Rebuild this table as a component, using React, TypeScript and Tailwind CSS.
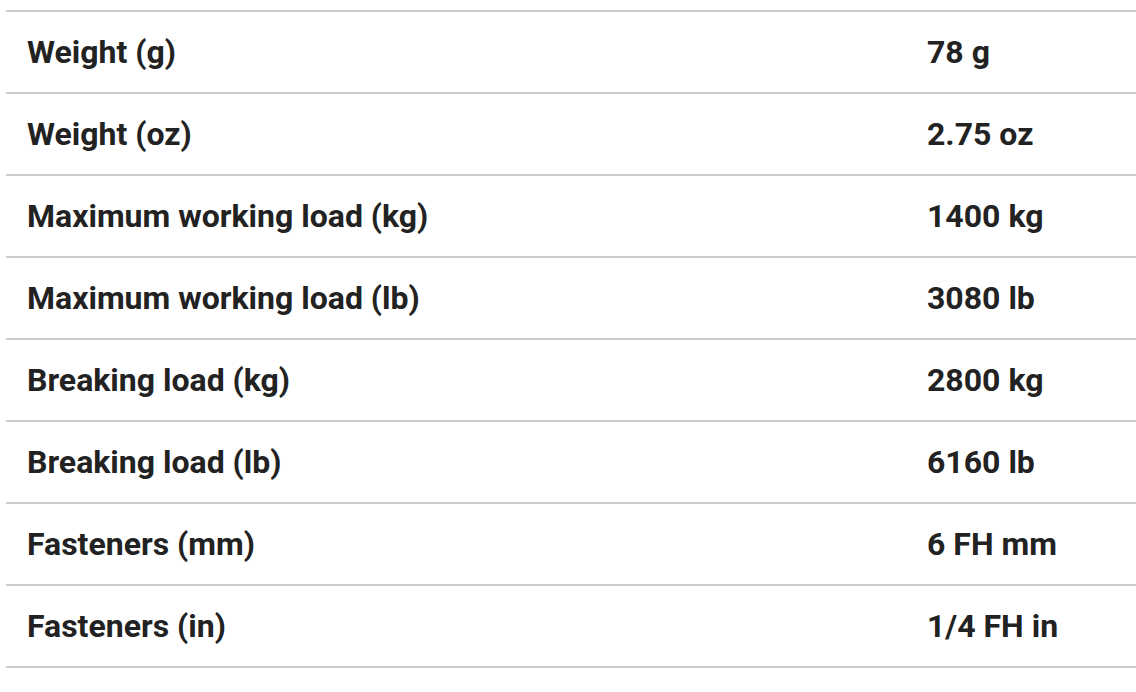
const rows: [string, string][] = [
  ["Weight (g)", "78 g"],
  ["Weight (oz)", "2.75 oz"],
  ["Maximum working load (kg)", "1400 kg"],
  ["Maximum working load (lb)", "3080 lb"],
  ["Breaking load (kg)", "2800 kg"],
  ["Breaking load (lb)", "6160 lb"],
  ["Fasteners (mm)", "6 FH mm"],
  ["Fasteners (in)", "1/4 FH in"],
];

export default function App() {
  return (
    <div className="min-h-screen bg-white pt-[10px] pl-[6px] font-['Roboto',sans-serif] text-[#222]">
      <table className="w-[1130px] border-collapse border-t-2 border-[#cccccc]">
        <tbody>
          {rows.map(([label, value]) => (
            <tr key={label} className="h-[82px] border-b-2 border-[#cccccc]">
              <td className="w-[900px] pl-[21px] text-[32px] font-bold">{label}</td>
              <td className="pl-[21px] text-[32px] font-bold">{value}</td>
            </tr>
          ))}
        </tbody>
      </table>
    </div>
  );
}
